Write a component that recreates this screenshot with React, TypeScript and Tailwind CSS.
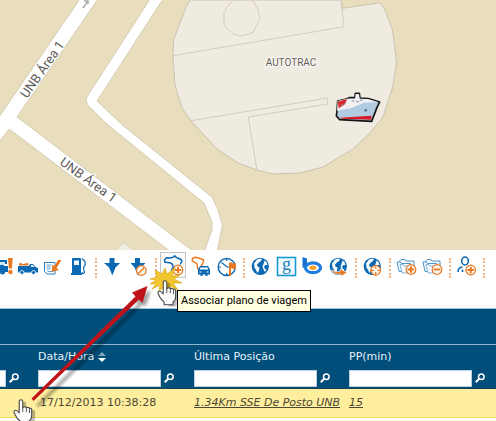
import React from "react";

const BLUE = "#0b68b3";
const ORANGE = "#e87722";

function Badge({ x, y, kind }: { x: number; y: number; kind: "plus" | "minus" | "ban" | "target" }) {
  return (
    <g fill="none" stroke={ORANGE} strokeWidth="1.2">
      <circle cx={x} cy={y} r="4.8" fill="#fff8f0" />
      {kind === "plus" && <path d={`M${x - 3.2} ${y}h6.4M${x} ${y - 3.2}v6.4`} strokeWidth="2" />}
      {kind === "minus" && <path d={`M${x - 3.2} ${y}h6.4`} strokeWidth="1.8" />}
      {kind === "ban" && <path d={`M${x - 3} ${y + 3}l6 -6`} />}
      {kind === "target" && (
        <path d={`M${x - 5} ${y}h3.4M${x + 1.6} ${y}h3.4M${x} ${y - 5}v3.4M${x} ${y + 1.6}v3.4`} />
      )}
    </g>
  );
}

function Globe() {
  return (
    <g>
      <circle cx="12.3" cy="14.3" r="8.6" fill={BLUE} />
      <path d="M9 7.500l3-1 2 .5-1 2-2 1.500-2 2 .5 2 2 1-.5 3-1.500 2.500-1.500-3-1.500-2.500-.5-4z M16.500 8.500l2 1.500 1 3-2 0-1.500 1.500 1 2.500 1.500.5-1.500 2.500-1.500-2.500-1-3 1-2.500z" fill="#f3fbff" />
    </g>
  );
}

function Folders() {
  return (
    <g fill="#f4faff" stroke="#4d93c8" strokeWidth="1">
      <path d="M6 11V8.5l1-1h4l1 1.5h8V16" />
      <path d="M5 19.5L3 10h3l1.500 1.500h9l-.5 8z" />
      <path d="M8 21L6 12.500h3l1 1.500h8l-1 7z" stroke="#84b6db" />
    </g>
  );
}

const icons: Record<string, React.ReactNode> = {
  "Alerta de veículo": (
    <g>
      <path d="M6 8h13v4h-3v2h4v6h-3a2.500 2.500 0 0 1-5 0H6z" fill={BLUE} />
      <path d="M12 10h5v3h-5z" fill="#cfe6f5" />
      <path d="M20 6h4.700l-.8 10.500h-3z" fill={ORANGE} />
      <circle cx="22.400" cy="20" r="2.200" fill={ORANGE} />
    </g>
  ),
  Veículo: (
    <g>
      <path d="M4 14h11l1-2h3l2.500 3 2.500 1v4.500H4z" fill={BLUE} />
      <path d="M17 13h2l1.500 2H17z" fill="#d7ecf9" />
      <path d="M5 11.500q1.500-1 3 0t3 0 3.500 0v2H5z" fill={ORANGE} />
      <circle cx="8" cy="20.500" r="2" fill={BLUE} stroke="#fff" strokeWidth=".8" />
      <circle cx="19.500" cy="20.500" r="2" fill={BLUE} stroke="#fff" strokeWidth=".8" />
    </g>
  ),
  Mensagens: (
    <g>
      <path d="M4.500 10.500h10.500v11.500h-8l-2.500-2.500z" fill="#fff" stroke="#2f7fbe" />
      <path d="M6.500 13h5M6.500 15h4M6.500 17h4M7.500 19.500h6" stroke="#5e9fd0" />
      <path d="M18 8h3.500l-5 8 2.500 2-7.500 2 1-7.500 2 1.500z" fill={ORANGE} />
    </g>
  ),
  Combustível: (
    <g>
      <path d="M6 7q0-1 1-1h7q1 0 1 1v14h1v2H5v-2h1z" fill={BLUE} />
      <path d="M8 8.500h5v4.500H8z" fill="#f4faff" />
      <path d="M16 6.500l3 3v4l-1.500 2 .8 5q-.8 2-2.500 0" fill="none" stroke={BLUE} strokeWidth="1.2" />
    </g>
  ),
  Posição: <path d="M9.500 6h5v5h5.500l-4.500 4.500-3.200 8-3.200-8L4 11h5.500z" fill={BLUE} />,
  "Cancelar posição": (
    <g>
      <path d="M9 6h5v5h5.500l-4.500 4.500-3.200 8-3.200-8L4.500 11H9z" fill={BLUE} />
      <Badge x={15.3} y={18.5} kind="ban" />
    </g>
  ),
  "Associar plano de viagem": (
    <g>
      <path d="M13 20.500l-1.500-2.500 1.700-3-1-3-2.500-1.300-4.700-.4-.5-2.500 2-2 3.200.2 3.300-.8 1.700-1.500 1.600 1.800 4.400 1.800 1.300 1.700-1.800 3.500" fill="none" stroke={BLUE} strokeWidth="1.500" strokeLinejoin="round" />
      <Badge x={18} y={18} kind="plus" />
    </g>
  ),
  "Plano do veículo": (
    <g>
      <path d="M10.500 18l-1.200-2.700V12l-2.600-1.700-2.400-1.300V6.500l2.400-1.200 5 1 4 1.700-1.200 4-1.500 2" fill="none" stroke={ORANGE} strokeWidth="1.400" strokeLinejoin="round" />
      <path d="M10 17.500l2-3.500h8l2 3.500v5h-2.500V24h-2v-1.500h-3V24h-2v-1.500H10z" fill={BLUE} />
      <path d="M12.500 15.500h7l1 2h-9z" fill="#fff" />
      <path d="M11.500 20h2M18.500 20h2" stroke="#fff" />
    </g>
  ),
  "Tempo de viagem": (
    <g fill="none">
      <circle cx="12.700" cy="15" r="8.500" stroke={BLUE} strokeWidth="1.400" />
      <path d="M7.500 10.500l5.500 4.500h2M12.700 7v2M5 15h2M12.700 21v2" stroke={BLUE} strokeWidth="1.200" />
      <path d="M15 11q2-1.500 3.500 0t3.500 0v5.500q-2 1-3.500 0-1-1-1.500 0V24H15z" fill={ORANGE} />
    </g>
  ),
  "Mapa mundial": <Globe />,
  "Mapa Google": (
    <g>
      <rect x="3.500" y="5.500" width="18" height="18" fill="#f4fcff" stroke="#169bd0" strokeWidth="1.600" />
      <text x="12.500" y="18" textAnchor="middle" fill="#167fb6" fontSize="18" className="font-['Liberation_Serif',serif]">g</text>
    </g>
  ),
  "Mapa Bing": (
    <g fill="none">
      <ellipse cx="13" cy="15.800" rx="7.600" ry="4.900" stroke="#1f7ddb" strokeWidth="3.200" />
      <path d="M2.500 5l4.500 1.500v6l-4 3.500h-.5z" fill="#1672d2" />
      <ellipse cx="12.800" cy="15.800" rx="3.500" ry="2.200" fill="#f6a02a" />
    </g>
  ),
  "Mudar mapa": (
    <g>
      <Globe />
      <path d="M5 18q4 2.500 9 1.500v-2.500l7 3.500-6 4v-2.300q-7 1-10-4.200z" fill={ORANGE} stroke="#fff" strokeWidth=".6" />
    </g>
  ),
  "Localizar no mapa": (
    <g>
      <Globe />
      <Badge x={15.700} y={18.300} kind="target" />
    </g>
  ),
  "Adicionar grupo": (
    <g>
      <Folders />
      <Badge x={17} y={17.500} kind="plus" />
    </g>
  ),
  "Remover grupo": (
    <g>
      <Folders />
      <Badge x={17} y={17.500} kind="minus" />
    </g>
  ),
  "Adicionar usuário": (
    <g>
      <ellipse cx="11" cy="9" rx="3.300" ry="4" fill="none" stroke={BLUE} strokeWidth="1.600" />
      <path d="M4 20q0-4.500 4.500-5M13.500 15q2 .3 3 1.200M8.500 17.500V20" fill="none" stroke={BLUE} strokeWidth="1.600" />
      <Badge x={16.700} y={18} kind="plus" />
    </g>
  ),
};

const groups = [
  ["Alerta de veículo", "Veículo", "Mensagens", "Combustível"],
  ["Posição", "Cancelar posição"],
  ["Associar plano de viagem", "Plano do veículo", "Tempo de viagem"],
  ["Mapa mundial", "Mapa Google", "Mapa Bing", "Mudar mapa"],
  ["Localizar no mapa"],
  ["Adicionar grupo", "Remover grupo"],
  ["Adicionar usuário"],
];

function MapView() {
  return (
    <svg viewBox="0 0 496 250" preserveAspectRatio="xMinYMin slice" className="block h-[250px] w-full bg-[#e8ddbc]" role="img" aria-label="Mapa">
      <path d="M190 0L186 7 173.500 40 173 57 175 85 182 108 191 121 217 149 238 163 257 170 273 174 300 173 323 167 353 149 370 133 383 117 392.500 88 396.500 62 392.500 30 385 10 380 2.700 342.300 8.300 341 0z" fill="#f0ebe1" stroke="#cbc3b0" />
      <g fill="none" stroke="#d3ccbf">
        <path d="M173 55.700L344 26.700 341 0M233 0L224 11.500V25l9.500 9 7.500 2 12-3.500 7-14-3-11.500-5-7.500M191 120.700l136.300-22.700.5 6-79.500 13 8.500 52.500" />
      </g>
      <g fill="#fff" stroke="#d6ccb3">
        <path d="M123 242l-8 10h22z" fill="#f0ebe1" />
        <path d="M80-1L-1 117v25L9.300 129 171 252h23L27.700 125 17 117 98-1z" />
        <path d="M150-1L87.500 96q-3 5 1 10l19.500 19 96 78 8 19v8l-8 22h13l5.500-27-4.500-15-6-13-89-71.500L97 101 163-1z" />
      </g>
      <path d="M83 8l5-7M84 1l4 0 0 3" stroke="#aaa" strokeWidth="1.500" fill="none" />
      <g className="font-['Roboto',sans-serif]" fill="#5d5b57" stroke="#fff" strokeWidth="2" paintOrder="stroke" fontSize="13">
        <text transform="translate(27 99) rotate(-55)">UNB Área 1</text>
        <text transform="translate(59 164) rotate(36)">UNB Área 1</text>
        <text x="291" y="66" textAnchor="middle" fontSize="10" stroke="#faf8f4">AUTOTRAC</text>
      </g>
      <svg x="325" y="85" width="65" height="45" viewBox="0 0 195 135">
        <path d="M38 48l26-6 9-4 17 0 1-13h12l2 14 25 2 34 10-8 16-16 42-96-5-10-11 2-15z" fill="#b1cbe0" stroke="#151515" strokeWidth="5" strokeLinejoin="round" />
        <path d="M38 48l28-7 24 0 2-14h10l2 14 25 1 30 9-42 2-39 17-42 7z" fill="#f0f0f2" />
        <path d="M38 50l28-8-5 15-20 13z" fill="#d92b2f" />
        <path d="M47 62l7-4M57 55l6-3M80 48h8M94 50h8M105 45h8" stroke="#8c8c9b" strokeWidth="3" />
        <path d="M45 98l94-6v12l-89-3z" fill="#d41a27" />
        <circle cx="122" cy="76" r="4" fill="#536d82" />
      </svg>
    </svg>
  );
}

function Toolbar() {
  return (
    <div role="toolbar" className="flex h-[58px] overflow-hidden bg-white pt-0.5">
      <div className="-ml-3 flex shrink-0">
        {groups.map((group) => (
          <div key={group[0]} className="flex">
            {group.map((name) => (
              <button
                key={name}
                type="button"
                aria-label={name}
                className={
                  name === "Associar plano de viagem"
                    ? "mr-0.5 size-[26px] shrink-0 bg-[#fafafa] outline -outline-offset-1 outline-[#c4c4c4]"
                    : "size-[26px] shrink-0"
                }
              >
                <svg viewBox="0 0 26 26" className="block size-[26px]">{icons[name]}</svg>
              </button>
            ))}
            <div className="flex w-2 justify-center pt-1.5">
              <div className="h-5 border-l-2 border-dotted border-[#eeb58c]" />
            </div>
          </div>
        ))}
      </div>
    </div>
  );
}

function Filter({ label }: { label: string }) {
  return (
    <div className="flex items-center gap-[3px]">
      <input type="text" aria-label={label} className="h-[17px] w-[123px] shrink-0 border border-[#b9cfdd] bg-white px-1" />
      <button type="button" aria-label={`Buscar ${label}`} className="shrink-0">
        <svg viewBox="0 0 10 10" className="block size-2.5" fill="none" stroke="#fff" strokeWidth="1.500">
          <circle cx="6.300" cy="3.700" r="2.800" />
          <path d="M4.200 5.800L.7 9.300" strokeWidth="2" />
        </svg>
      </button>
    </div>
  );
}

function Grid() {
  return (
    <table className="w-full table-fixed border-collapse text-left text-[11px] leading-4">
      <colgroup>
        <col className="w-[38px]" />
        <col className="w-[156px]" />
        <col className="w-[155px]" />
        <col />
      </colgroup>
      <thead className="bg-[#004e79] text-[#e6f2f9]">
        <tr className="border-t border-[#a5c4d5]">
          <td colSpan={4} className="h-9 p-0" />
        </tr>
        <tr className="h-[25px] border-t border-[#8fb6cc]">
          <td className="p-0" />
          <th scope="col" className="p-0 font-normal">
            <span className="flex items-center gap-1">
              Data/Hora
              <svg viewBox="0 0 8 10" className="h-2.5 w-2">
                <path d="M0 4l4-4 4 4z" fill="#7fa6bc" />
                <path d="M0 6h8l-4 4z" fill="#fff" />
              </svg>
            </span>
          </th>
          <th scope="col" className="p-0 font-normal">Última Posição</th>
          <th scope="col" className="p-0 font-normal">PP(min)</th>
        </tr>
        <tr className="h-[19px] border-b border-[#16415a] align-top">
          <td className="p-0 pr-[19px]">
            <div className="flex justify-end">
              <Filter label="Veículo" />
            </div>
          </td>
          <td className="p-0"><Filter label="Data/Hora" /></td>
          <td className="p-0"><Filter label="Última Posição" /></td>
          <td className="p-0"><Filter label="PP(min)" /></td>
        </tr>
      </thead>
      <tbody className="bg-[#ffee9e] text-[#4b4733]">
        <tr className="h-[29px] border-b border-[#efd95c]">
          <td className="p-0" />
          <td className="p-0 pl-0.5">17/12/2013 10:38:28</td>
          <td className="overflow-hidden p-0 italic whitespace-nowrap">
            <a href="#posicao" className="underline">1.34Km SSE De Posto UNB </a>
          </td>
          <td className="p-0 italic"><a href="#pp" className="underline">15</a></td>
        </tr>
      </tbody>
    </table>
  );
}

function Hand() {
  return (
    <>
      <path d="M8 14V3q0-2 2-2t2 2v7q3-2 4 0 3-1 3.500 1 2-1 2.500 1v7q0 4-3 6v3H10v-3q-3-2-5-6l-2-4q0-2 2-2 2 0 3 3z" transform="translate(3 2)" fill="#000" opacity=".25" />
      <path d="M7 14V3q0-2 2-2t2 2v7q3-2 4 0 3-1 3.500 1 2-1 2.500 1v7q0 4-3 6v3H8v-3q-3-2-5-6l-2-4q0-2 2-2 2 0 4 3z" fill="#fbfbfb" stroke="#444" strokeWidth="1.200" strokeLinejoin="round" />
      <path d="M11 10v5M15 10.500V15M18.500 11.500V16" stroke="#444" fill="none" />
    </>
  );
}

function Guide() {
  return (
    <div className="pointer-events-none absolute inset-0 overflow-hidden">
      <svg width="496" height="421" viewBox="0 0 496 421" className="absolute top-0 left-0">
        <defs>
          <linearGradient id="red" x1="0" y1="0" x2="1" y2="1">
            <stop offset="0" stopColor="#d51b20" />
            <stop offset="1" stopColor="#a90c12" />
          </linearGradient>
          <filter id="soft" x="-20%" y="-20%" width="140%" height="140%">
            <feGaussianBlur stdDeviation="1.500" />
          </filter>
        </defs>
        <path d="M36 405L138 304 135 299 151 290 146 306 142 305 39 407z" opacity=".35" filter="url(#soft)" />
        <path d="M31.500 398.500L135.500 296.500 132 292.500 147.500 286 142.500 303 139 299.500 33.500 401z" fill="url(#red)" />
        <path d="M155 270l7 4 3-6 2 6 8-6-3 8 8-1-6 4 8 4-9 0 5 7-8-4-1 5-5-4-5 4 1-6-8 4 4-5-6 0 6-4-6-1 7-2z" fill="#f2c62e" stroke="#dba91b" strokeWidth=".7" />
        <svg x="157" y="279" width="24" height="30" viewBox="0 0 27 32"><Hand /></svg>
        <svg x="13" y="398" width="24" height="30" viewBox="0 0 27 32"><Hand /></svg>
      </svg>
      <div role="tooltip" className="absolute top-[290px] left-[177px] border border-black bg-[#ffffe1] px-[3px] py-0.5 font-['Roboto',sans-serif] text-[11px] leading-4 whitespace-nowrap text-black">
        Associar plano de viagem
      </div>
    </div>
  );
}

export default function App() {
  return (
    <main className="relative min-h-screen w-full overflow-hidden bg-white font-['DejaVu_Sans',sans-serif]">
      <MapView />
      <Toolbar />
      <Grid />
      <Guide />
    </main>
  );
}
